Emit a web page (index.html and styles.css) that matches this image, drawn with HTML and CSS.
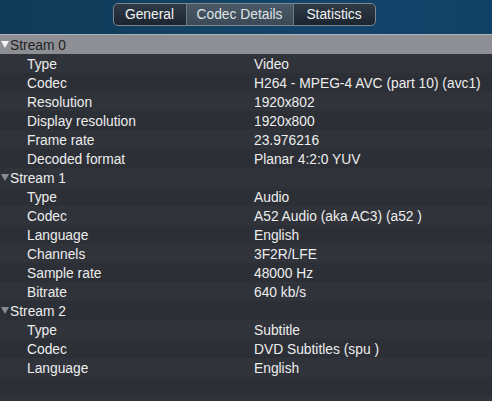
FILE: index.html
```html
<!DOCTYPE html>
<html lang="en">
<head>
    <meta charset="UTF-8">
    <title>Codec Details</title>
    <link rel="stylesheet" href="styles.css">
</head>
<body>
    <div class="toolbar">
        <div class="segments">
            <div class="seg">General</div>
            <div class="seg active">Codec Details</div>
            <div class="seg">Statistics</div>
        </div>
    </div>

    <div class="tree">
        <div class="row stream selected"><span class="arrow"></span>Stream 0</div>
        <div class="row"><span class="key">Type</span><span class="val">Video</span></div>
        <div class="row"><span class="key">Codec</span><span class="val">H264 - MPEG-4 AVC (part 10) (avc1)</span></div>
        <div class="row"><span class="key">Resolution</span><span class="val">1920x802</span></div>
        <div class="row"><span class="key">Display resolution</span><span class="val">1920x800</span></div>
        <div class="row"><span class="key">Frame rate</span><span class="val">23.976216</span></div>
        <div class="row"><span class="key">Decoded format</span><span class="val">Planar 4:2:0 YUV</span></div>
        <div class="row stream"><span class="arrow"></span>Stream 1</div>
        <div class="row"><span class="key">Type</span><span class="val">Audio</span></div>
        <div class="row"><span class="key">Codec</span><span class="val">A52 Audio (aka AC3) (a52 )</span></div>
        <div class="row"><span class="key">Language</span><span class="val">English</span></div>
        <div class="row"><span class="key">Channels</span><span class="val">3F2R/LFE</span></div>
        <div class="row"><span class="key">Sample rate</span><span class="val">48000 Hz</span></div>
        <div class="row"><span class="key">Bitrate</span><span class="val">640 kb/s</span></div>
        <div class="row stream"><span class="arrow"></span>Stream 2</div>
        <div class="row"><span class="key">Type</span><span class="val">Subtitle</span></div>
        <div class="row"><span class="key">Codec</span><span class="val">DVD Subtitles (spu )</span></div>
        <div class="row"><span class="key">Language</span><span class="val">English</span></div>
        <div class="row"></div>
        <div class="row"></div>
    </div>
</body>
</html>
```

FILE: styles.css
```css
* {
    margin: 0;
    padding: 0;
    box-sizing: border-box;
    font-family: "Liberation Sans", Arial, sans-serif;
}

body {
    background: #2c2f35;
    color: #ededed;
    font-size: 13.8px;
    overflow: hidden;
}

.toolbar {
    height: 35px;
    background: linear-gradient(90deg, #113a56 0%, #13456a 60%, #124166 100%);
    border-bottom: 1px solid #aeb3b8;
    display: flex;
    justify-content: center;
    padding-top: 3px;
    padding-right: 4px;
}

.segments {
    display: flex;
    height: 23px;
    border: 1px solid #7d858e;
    border-radius: 5px;
    overflow: hidden;
    background: linear-gradient(#2e3b47, #1b2530);
}

.seg {
    display: flex;
    align-items: center;
    justify-content: center;
    white-space: nowrap;
    color: #f2f2f2;
    font-size: 13.8px;
    border-left: 1px solid #6f7882;
    width: 72px;
}

.seg:first-child {
    border-left: none;
}

.seg.active {
    background: linear-gradient(#4a5966, #3c4956);
    color: #dfe3e6;
    width: 107px;
}

.seg:last-child {
    width: 82px;
}

.row {
    height: 19px;
    display: flex;
    align-items: center;
    padding-top: 2px;
    white-space: nowrap;
    background: #2c2f35;
}

.row:nth-child(even) {
    background: #30333a;
}

.row.selected {
    background: #8e8f94;
    color: #1e1f22;
}

.stream {
    padding-left: 10px;
    position: relative;
}

.arrow {
    position: absolute;
    left: 1px;
    top: 6px;
    width: 0;
    height: 0;
    border-left: 4px solid transparent;
    border-right: 4px solid transparent;
    border-top: 7px solid #8a8c90;
}

.selected .arrow {
    border-top-color: #f4f4f4;
}

.key {
    width: 254px;
    padding-left: 27px;
}
```
